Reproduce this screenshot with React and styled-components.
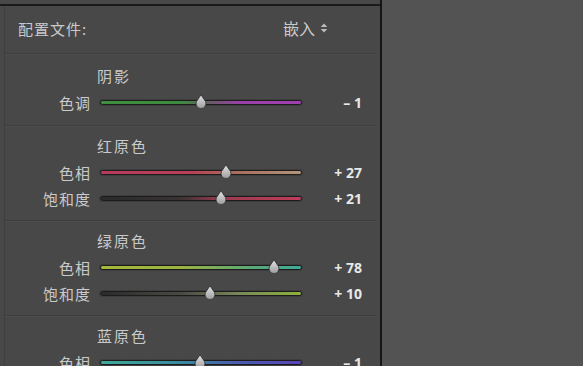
import React from "react";
import styled, { createGlobalStyle } from "styled-components";

const Global = createGlobalStyle`
  html, body { margin: 0; padding: 0; background: #535353; }
  body { font-family: "Noto Sans CJK SC", "Noto Sans", sans-serif; }
  #root { width: 583px; height: 366px; overflow: hidden; }
`;

const Page = styled.div`
  display: flex;
  width: 583px;
  height: 366px;
  background: #535353;
`;

const Panel = styled.div`
  width: 380px;
  flex: none;
  height: 366px;
  background: #484848;
  border-right: 2px solid #151515;
  display: flex;
  flex-direction: column;
  overflow: hidden;
`;

const TopRule = styled.div`
  height: 2px;
  margin-top: 4px;
  background: #1a1a1a;
  flex: none;
`;

const Content = styled.div`
  margin-left: 4px;
  margin-right: 4px;
  border-left: 1px solid #3f3f3f;
  flex: 1;
  display: flex;
  flex-direction: column;
`;

const ProfileBar = styled.div`
  height: 44px;
  display: flex;
  align-items: center;
  justify-content: space-between;
  padding: 0 48px 3px 13px;
  color: #cacaca;
  font-size: 15px;
  letter-spacing: 1px;
  border-bottom: 1px solid #3e3e3e;
  box-shadow: 0 1px 0 #4d4d4d;
`;

const Select = styled.div`
  display: flex;
  align-items: center;
  gap: 5px;
  font-size: 16px;
  letter-spacing: 0;
`;

const Section = styled.div`
  padding: ${(p) => (p.first ? "12px 0 9px" : "10px 0 8px")};
  border-bottom: 1px solid #3e3e3e;
  box-shadow: 0 1px 0 #4d4d4d;
`;

const Header = styled.div`
  height: 24px;
  box-sizing: border-box;
  padding: 0 0 5px 92px;
  display: flex;
  align-items: center;
  color: #cacaca;
  font-size: 15px;
  letter-spacing: 2px;
`;

const Row = styled.div`
  height: 26px;
  display: grid;
  grid-template-columns: 85px 202px 50px;
  column-gap: 10px;
  align-items: center;
`;

const Label = styled.div`
  text-align: right;
  color: #cacaca;
  font-size: 15px;
  letter-spacing: 1px;
  margin-right: -1px;
  padding-bottom: 2px;
`;

const Value = styled.div`
  text-align: right;
  color: #e8e8e8;
  font-family: "Open Sans", "Liberation Sans", sans-serif;
  font-weight: 700;
  font-size: 14px;
  padding-bottom: 1px;
`;

const TrackWrap = styled.div`
  position: relative;
  height: 14px;
  display: flex;
  align-items: center;
  margin-top: -2px;
`;

const Track = styled.div`
  width: 100%;
  height: 3px;
  border: 1px solid #1c1c1c;
  border-radius: 3px;
  background: ${(p) => p.grad};
  box-shadow: 0 0 0 1px rgba(0,0,0,0.15);
`;

const Ticks = styled.div`
  position: absolute;
  left: 0;
  right: 0;
  top: -3px;
  height: 4px;
  display: flex;
  justify-content: space-between;
  padding: 0 2px;
  span {
    width: 1px;
    height: 4px;
    background: rgba(80, 80, 80, 0.35);
  }
`;

const Thumb = styled.svg`
  position: absolute;
  top: -1px;
  width: 12px;
  height: 14px;
  margin-left: -6px;
`;

const grads = {
  tint: "linear-gradient(90deg, #3f8f3f 0%, #3f8a40 40%, #6a5a6a 55%, #9a3fa8 70%, #a040b0 100%)",
  redHue: "linear-gradient(90deg, #b83a5c 0%, #b84058 45%, #a86a58 65%, #b2957a 100%)",
  redSat: "linear-gradient(90deg, #2a2a2a 0%, #3a3434 40%, #9a3a50 60%, #c23c5c 100%)",
  greenHue: "linear-gradient(90deg, #a6b83a 0%, #9ab440 40%, #5aa878 75%, #3eaa98 100%)",
  greenSat: "linear-gradient(90deg, #2a2a2a 0%, #4a4a44 40%, #7a8a5a 70%, #8fb03c 100%)",
  blueHue: "linear-gradient(90deg, #3eaa98 0%, #3a8aa0 40%, #4a5ab0 70%, #5a44b8 100%)",
};

const sections = [
  { title: "阴影", first: true, rows: [{ label: "色调", value: "– 1", pos: 0.5, grad: grads.tint }] },
  {
    title: "红原色",
    rows: [
      { label: "色相", value: "+ 27", pos: 0.625, grad: grads.redHue },
      { label: "饱和度", value: "+ 21", pos: 0.6, grad: grads.redSat },
    ],
  },
  {
    title: "绿原色",
    rows: [
      { label: "色相", value: "+ 78", pos: 0.86, grad: grads.greenHue },
      { label: "饱和度", value: "+ 10", pos: 0.545, grad: grads.greenSat },
    ],
  },
  { title: "蓝原色", rows: [{ label: "色相", value: "– 1", pos: 0.495, grad: grads.blueHue }] },
];

function Slider({ pos, grad, id }) {
  return (
    <TrackWrap>
      <Ticks>
        {Array.from({ length: 9 }).map((_, i) => (
          <span key={i} />
        ))}
      </Ticks>
      <Track grad={grad} />
      <Thumb viewBox="0 0 12 14" style={{ left: `${pos * 100}%` }}>
        <defs>
          <linearGradient id={id} x1="0" y1="0" x2="0" y2="1">
            <stop offset="0" stopColor="#e4e4e4" />
            <stop offset="1" stopColor="#9c9c9c" />
          </linearGradient>
        </defs>
        <path d="M6 0.8 L10.6 7.6 A5 5 0 1 1 1.4 7.6 Z" fill={`url(#${id})`} stroke="#2a2a2a" strokeWidth="0.8" />
      </Thumb>
    </TrackWrap>
  );
}

function Arrows() {
  return (
    <svg width="8" height="10" viewBox="0 0 8 10">
      <path d="M4 0.5 L7.2 4 H0.8 Z" fill="#bdbdbd" />
      <path d="M4 9.5 L7.2 6 H0.8 Z" fill="#bdbdbd" />
    </svg>
  );
}

export default function App() {
  return (
    <>
      <Global />
      <Page>
        <Panel>
          <TopRule />
          <Content>
            <ProfileBar>
              <span>配置文件:</span>
              <Select>
                <span>嵌入</span>
                <Arrows />
              </Select>
            </ProfileBar>
            {sections.map((s, si) => (
              <Section key={si} first={s.first}>
                <Header>{s.title}</Header>
                {s.rows.map((r, ri) => (
                  <Row key={ri}>
                    <Label>{r.label}</Label>
                    <Slider pos={r.pos} grad={r.grad} id={`g${si}${ri}`} />
                    <Value>{r.value}</Value>
                  </Row>
                ))}
              </Section>
            ))}
          </Content>
        </Panel>
      </Page>
    </>
  );
}
